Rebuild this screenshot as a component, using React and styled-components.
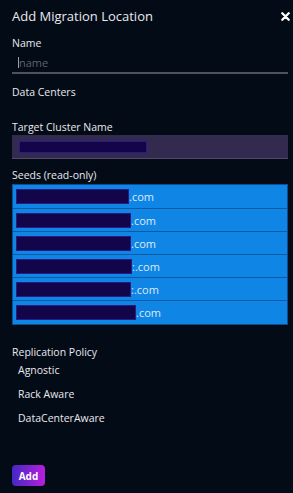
import React from "react";
import styled, { createGlobalStyle } from "styled-components";

const Global = createGlobalStyle`
  html, body { margin: 0; padding: 0; background: #030b16; }
  body { font-family: "Open Sans", "DejaVu Sans", sans-serif; }
  * { box-sizing: border-box; }
`;

const Panel = styled.div`
  width: 293px;
  height: 493px;
  background: #030b16;
  color: #e9e9ef;
  padding: 8px 3px 0 12px;
  display: flex;
  flex-direction: column;
`;

const Header = styled.div`
  display: flex;
  justify-content: space-between;
  align-items: center;
  height: 16px;
  line-height: 16px;
`;

const Title = styled.div`
  font-size: 13px;
  font-weight: 500;
`;

const Close = styled.div`
  width: 9px;
  height: 9px;
  display: flex;
  margin-top: 1px;
`;

const Label = styled.div`
  font-size: 10.5px;
  font-weight: 500;
  margin-top: ${(p) => p.$mt}px;
  height: 14px;
  line-height: 14px;
`;

const Underline = styled.div`
  margin-top: 3px;
  margin-right: 2px;
  height: 21px;
  border-bottom: 2px solid #4d525e;
  display: flex;
  align-items: center;
  padding-left: 6px;
  font-size: 11px;
  color: #5f6470;
`;

const Caret = styled.span`
  display: inline-block;
  width: 1px;
  height: 11px;
  background: #9aa0aa;
`;

const ClusterBox = styled.div`
  margin-top: 1px;
  margin-right: 2px;
  height: 24px;
  background: #332b4f;
  border-bottom: 1px solid #514a6a;
  display: flex;
  align-items: center;
  padding-left: 7px;
`;

const Redact = styled.div`
  width: ${(p) => p.$w}px;
  height: ${(p) => p.$h}px;
  background: #12054a;
  border: 1px solid #2a1b86;
  flex-shrink: 0;
`;

const Seeds = styled.div`
  margin-top: 2px;
  margin-right: 2px;
  border: 1px solid #0a4f92;
  display: flex;
  flex-direction: column;
`;

const SeedRow = styled.div`
  height: ${(p) => p.$h}px;
  background: #0f85e6;
  border-top: ${(p) => (p.$first ? "none" : "1px solid #0b5aa4")};
  display: flex;
  align-items: center;
  padding-left: 3px;
  font-size: 11px;
  color: #dfeaf8;
`;

const Option = styled.div`
  font-size: 10.5px;
  font-weight: 500;
  padding-left: 6px;
  height: 14px;
  line-height: 14px;
  margin-top: ${(p) => p.$mt}px;
`;

const AddButton = styled.button`
  margin-top: 40px;
  width: 33px;
  height: 21px;
  border: none;
  border-radius: 4px;
  background: linear-gradient(90deg, #4528c4 0%, #b81ede 100%);
  color: #fff;
  font-family: inherit;
  font-size: 10px;
  font-weight: 700;
  padding: 0;
  cursor: pointer;
`;

const seeds = [
  { w: 113, h: 23, suffix: ".com" },
  { w: 115, h: 23, suffix: ".com" },
  { w: 115, h: 23, suffix: ".com" },
  { w: 116, h: 23, suffix: ":.com" },
  { w: 115, h: 23, suffix: ":.com" },
  { w: 120, h: 24, suffix: ".com" },
];

export default function App() {
  return (
    <>
      <Global />
      <Panel>
        <Header>
          <Title>Add Migration Location</Title>
          <Close>
            <svg width="9" height="9" viewBox="0 0 9 9">
              <path d="M1.3 1.3 L7.7 7.7 M7.7 1.3 L1.3 7.7" stroke="#fff" strokeWidth="2.3" strokeLinecap="round" />
            </svg>
          </Close>
        </Header>
        <Label $mt={12}>Name</Label>
        <Underline>
          <Caret />
          name
        </Underline>
        <Label $mt={11}>Data Centers</Label>
        <Label $mt={21}>Target Cluster Name</Label>
        <ClusterBox>
          <Redact $w={128} $h={12} />
        </ClusterBox>
        <Label $mt={9}>Seeds (read-only)</Label>
        <Seeds>
          {seeds.map((s, i) => (
            <SeedRow key={i} $h={s.h} $first={i === 0}>
              <Redact $w={s.w} $h={15} />
              <span>{s.suffix}</span>
            </SeedRow>
          ))}
        </Seeds>
        <Label $mt={20}>Replication Policy</Label>
        <Option $mt={4}>Agnostic</Option>
        <Option $mt={10}>Rack Aware</Option>
        <Option $mt={10}>DataCenterAware</Option>
        <AddButton>Add</AddButton>
      </Panel>
    </>
  );
}
